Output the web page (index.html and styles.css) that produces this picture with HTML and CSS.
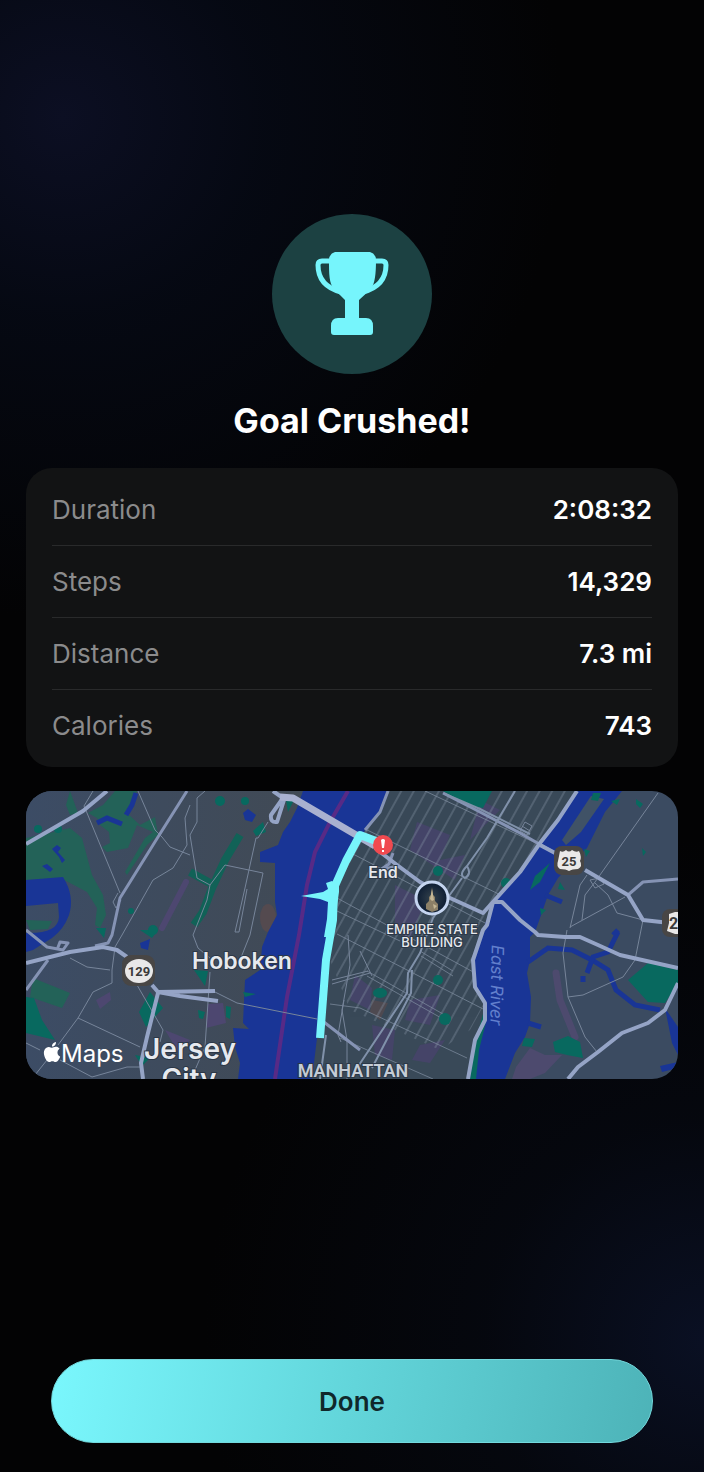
FILE: index.html
```html
<!DOCTYPE html>
<html lang="en">
<head>
    <meta charset="utf-8">
    <meta name="viewport" content="width=device-width, initial-scale=1">
    <title>Goal Crushed!</title>
    <link rel="stylesheet" href="styles.css">
</head>
<body>
    <main class="summary">
        <div class="badge">
            <svg class="trophy" viewBox="0 0 74 84" aria-hidden="true">
                <path class="handle" d="M17 9H7Q3 9 3 13C3 27 11 36 26 40M57 9H67Q71 9 71 13C71 27 63 36 48 40"/>
                <path d="M20 0H55Q61 2 61 8C61 22 60 31 56 37L44 48V66H51Q58 66 58 74V80Q58 83 55 83H19Q16 83 16 80V74Q16 66 23 66H30V48L19 37C14 31 14 22 14 8Q14 2 20 0Z"/>
            </svg>
        </div>
        <h1 class="title">Goal Crushed!</h1>

        <dl class="stats">
            <div class="stat"><dt>Duration</dt><dd>2:08:32</dd></div>
            <div class="stat"><dt>Steps</dt><dd>14,329</dd></div>
            <div class="stat"><dt>Distance</dt><dd>7.3 mi</dd></div>
            <div class="stat"><dt>Calories</dt><dd>743</dd></div>
        </dl>

        <div class="map">
            <svg viewBox="26 791 652 288" preserveAspectRatio="xMidYMid slice" role="img" aria-label="Map of the walked route">
                <defs>
                    <!-- Manhattan avenues -->
                    <pattern id="avenues" width="11" height="40" patternUnits="userSpaceOnUse" patternTransform="translate(400 880) rotate(29)">
                        <path class="street" d="M2 0V40"/>
                    </pattern>
                    <linearGradient id="jersey" x1="0" x2="1" y1="0" y2="0">
                        <stop offset="0" stop-color="#3c4c65"/>
                        <stop offset="0.5" stop-color="#3e4b5d"/>
                        <stop offset="1" stop-color="#414a55"/>
                    </linearGradient>
                    <radialGradient id="photo">
                        <stop offset="0" stop-color="#34424c"/>
                        <stop offset="1" stop-color="#0c1c33"/>
                    </radialGradient>
                </defs>
                <rect x="26" y="791" width="652" height="288" fill="#3b4b61"/>
                <rect x="26" y="791" width="274" height="288" fill="url(#jersey)"/>

                <!-- Parks -->
                <g class="park">
                    <path d="M26 838L50 833 70 828 82 838 92 875 103 895 106 915 100 928 95 925 97 908 87 892 70 883 60 878 26 880Z"/>
                    <path d="M70 791L78 813 70 815 66 805Z"/>
                    <path d="M88 813L103 805 115 791H137L127 813 140 825 155 817 158 835 147 845 127 875 125 872 145 838 153 832 137 825 128 848 107 852 102 847 110 843 109 832 100 825 97 818Z"/>
                    <path d="M26 920L52 921 48 929 30 930Z"/>
                    <path d="M33 978L70 993 62 1008 30 997Z"/>
                </g>
                <g class="park deep">
                    <path d="M26 997L34 998 42 1020 55 1040 26 1033ZM96 928H106L104 938ZM140 930H158L152 938ZM150 992L163 1008 146 1027 139 1012ZM135 1055L150 1058 142 1066Z"/>
                    <circle cx="220" cy="801" r="5"/><circle cx="245" cy="801" r="4"/>
                    <circle cx="131" cy="911" r="3"/><circle cx="153" cy="930" r="5"/>
                    <path d="M253 831L263 822 266 832 256 836ZM286 800L296 796 288 812Z"/>
                    <path class="strip" d="M240 835L225 860 212 888 203 912 194 925M190 872L210 883"/>
                    <path d="M194 970L208 971 205 986ZM198 1010L205 1012 203 1019 199 1018ZM226 1006L231 1007 230 1019 226 1017Z"/>
                    <circle cx="58" cy="829" r="4"/><circle cx="38" cy="829" r="4"/>
                </g>

                <!-- Districts -->
                <g class="district">
                    <path d="M186 882L162 928" stroke="#4d4770" stroke-width="6"/>
                    <path fill="#4d4770" d="M96 1000L110 992 111 1000 100 1009ZM208 1004L223 1003 226 1023 206 1028ZM165 1030L190 1040 180 1055Z"/>
                    <path d="M556 973L560 1000 575 1037" stroke="#4d4a6e" stroke-width="7"/>
                    <path fill="#4d4a6e" d="M516 1067L530 1048 545 1055 562 1055 545 1073 530 1079H512Z"/>
                    <ellipse cx="268" cy="918" rx="8" ry="14" fill="#544a4f"/>
                </g>

                <!-- Manhattan -->
                <path fill="#394958" d="M388 791H577L558 820 520 872 493 902 483 930 473 960 475 987 485 1003V1020L475 1040 468 1079H300L317 1038 330 900 365 830Z"/>
                <g class="district midtown">
                    <path d="M417 822L450 835 440 860 465 855 455 880 410 850ZM480 800L500 810 470 840ZM395 885L425 900 410 940 395 930ZM355 975L372 988 370 1010 350 1000ZM372 1025L395 1030 392 1060 375 1055ZM410 1000L440 995 430 1025 405 1020ZM420 1045L445 1040 430 1063 412 1060Z"/>
                    <path fill="#5e4a4c" d="M372 1000L388 1003 380 1020 370 1012Z"/>
                </g>
                <path fill="url(#avenues)" d="M388 791H577L558 820 520 872 493 902 483 930 473 960 475 987 485 1003 470 1030 440 1050 350 1010 330 960V900L365 830Z"/>
                <path class="street" d="M425 791L540 845M363 828L513 901M353 854L487 924M337 898L477 974M337 911L400 941M337 934L485 1010M367 971L443 1014M367 976L443 1019M420 951L453 971M421 956L453 976M330 1004L360 1008 467 1058M340 1038L433 1079"/>
                <g class="park deep">
                    <path d="M443 791H492L483 808 467 805Z"/>
                    <circle cx="438" cy="871" r="5"/><circle cx="506" cy="883" r="5"/>
                    <ellipse cx="380" cy="993" rx="7" ry="5"/><circle cx="445" cy="1019" r="6"/><circle cx="438" cy="980" r="5"/>
                </g>

                <!-- Water -->
                <g class="water">
                    <path d="M303 791L297 808 290 822 283 832 278 845 260 852V862L275 863V902L277 915 268 932 262 947 260 970 245 980 243 1023 249 1029 233 1028 235 1047 240 1063 238 1079H312L317 1038 330 900 365 830 380 812 388 791Z"/>
                    <path d="M577 791H622L605 812 587 848 558 878 548 895 540 918 535 932 530 937V960L527 973 531 997 530 1023 525 1037 515 1053 505 1079H468L475 1040 485 1020V1003L475 987 473 960 483 930 493 902 520 872 558 820Z"/>
                    <path d="M26 880L63 877Q75 896 69 915 64 929 52 938L33 950 26 952V933Q58 934 59 917L58 903 26 906Z"/>
                    <path d="M52 849L57 845 61 848 58 852 65 860 62 863 59 857ZM42 866L47 864 53 869 50 872ZM243 813L248 809 256 815 252 822 245 820ZM140 943L150 939 148 950 141 948Z"/>
                    <path d="M665 1008L678 1027V1055L672 1043ZM660 1066L678 1062V1068L662 1072Z"/>
                    <g class="creek">
                        <path d="M136 793L132 805 126 815M97 823L107 818 122 824"/>
                        <path d="M528 962L548 948 572 950 592 960 608 970 616 990 635 1005 660 1010"/>
                        <path d="M587 973L593 957 608 952 618 932M528 1023L541 1027M583 976V982M545 895L562 902M613 935L618 930"/>
                    </g>
                </g>
                <path fill="#405266" d="M591 796L604 799 581 832 566 845 562 840Z"/>
                <path class="park deep" d="M593 793L601 793 598 801 591 800ZM611 801L620 799 617 805ZM636 799L643 804 640 808 636 804ZM550 863L540 882 530 890 535 876ZM560 882L565 890 558 889ZM540 908L546 910 541 915ZM584 849L590 851 586 857ZM642 848L646 852 643 856ZM243 992L256 994 245 997ZM648 963L678 970V983L665 1003 648 1002 628 980ZM553 1042L568 1036 580 1042 583 1058 567 1055 555 1052ZM524 1038L535 1039 532 1047 522 1046ZM484 1010L486 1022 479 1050 476 1079H470L476 1040Z"/>

                <path class="ferry" d="M348 791L330 822 315 852 307 885 299 935 287 997 275 1079"/>

                <!-- Small roads -->
                <g class="road thin">
                    <path d="M93 791L84 806 87 813 120 893M138 791L155 830 162 837 170 847 190 855"/>
                    <path d="M190 805L185 818 187 845 173 868 153 880 122 935 115 947 112 970V983L93 992 78 1018 58 1045M205 791L197 798V822L190 835 197 878 210 885 207 900 193 935 198 948 210 958"/>
                    <path d="M268 822L258 838H256L245 888 235 932 239 932 247 889M210 885L225 865 263 873 250 935 240 960M210 972L205 1047 195 1070"/>
                    <path d="M78 1018L140 1047M70 958L87 967 110 970M137 985L163 1030 160 1042M26 1043L40 1050M60 1060L92 1077 127 1067H142M47 1060L35 1075M215 992L237 1003 317 1019"/>
                    <path d="M658 793L595 882 585 895 582 920M587 875L580 885 570 928M625 897L570 927M595 883L608 895 617 913 643 920 640 935 635 960 623 977 583 995 568 997"/>
                    <path d="M567 930L563 953 568 997 585 1037 597 1052M118 893L113 902 116 908 121 900"/>
                    <path d="M525 822L532 826 527 835 520 831ZM522 826L530 831M590 880L600 878 604 884 595 888Z"/>
                    <path d="M347 1079V1040L342 1010 350 965 348 935M332 984L370 973M332 980L368 971M360 951L372 976M344 1000L338 1035 341 1042"/>
                </g>

                <!-- Highways -->
                <g class="road">
                    <path d="M187 791L158 837 130 882 120 898 112 935 108 943 95 946M26 930L47 947 63 950 68 943 60 942 57 950M48 960L26 990"/>
                    <path d="M443 793L480 812 520 833 555 853M388 791L380 812 365 830"/>
                    <path d="M628 895L643 882 678 879M393 853L389 864 380 870 398 866M320 1019L360 1050"/>
                </g>
                <g class="road avenue">
                    <path d="M515 791L487 838 467 866Q458 875 465 878 472 874 467 866M462 878L433 918 420 953 408 973 407 993 357 1068M412 970L411 993 372 1068M445 794L480 809 530 834M326 1035L320 1079"/>
                </g>
                <g class="road wide">
                    <path d="M26 844L83 811 107 791M26 963L70 952 103 947 117 950 127 957M152 985L158 992 215 991M158 992L180 996 218 1001M158 993L147 1037 141 1063 143 1079"/>
                    <path d="M273 791L283 798 271 815Q270 823 277 822L284 800M493 902L502 902 520 920 535 932 538 935 565 937H580L598 945 620 955 678 968"/>
                    <path d="M577 791L558 820 540 843 520 872 493 902 487 925 483 930 473 960 475 987 485 1003V1020L475 1040 468 1079"/>
                    <path d="M585 870L628 895 643 920 670 923M555 853L540 845M678 983L665 1010 648 1023 622 1033 598 1052 578 1067 568 1079"/>
                    <path d="M375 848L397 865 420 882 450 898 483 913 493 902"/>
                </g>
                <path class="road bridge" d="M280 797L293 798 375 846"/>

                <!-- Walked route -->
                <path class="route" d="M384 844L360 835 346 861 334 888 333 920 326 960 320 1038"/>
                <path fill="#78f5fb" d="M301 896L323 892 328 889 326 883 332 881 339 886 339 892 335 920 330 937 324 937 327 919 328 902 320 899Z"/>

                <!-- Route shields -->
                <g class="shield">
                    <rect x="122" y="955" width="33" height="31" rx="9" fill="#484645"/>
                    <ellipse cx="139" cy="971" rx="14" ry="12" fill="#e9e8e8"/>
                    <text x="139" y="976">129</text>
                    <rect x="554" y="846" width="30" height="29" rx="8" fill="#484645"/>
                    <path fill="#e9e8e8" d="M560 851Q563 853 566 850 569 853 572 850 576 853 579 851 582 857 580 861 583 866 578 869 572 869 569 871 566 869 560 869 556 866 558 861 557 856Z"/>
                    <text x="569" y="866">25</text>
                    <rect x="662" y="909" width="30" height="28" rx="8" fill="#484645"/>
                    <path fill="#e9e8e8" d="M669 914L675 912H690V934H675L667 931 669 923Z"/>
                    <text class="shield-cut" x="669" y="929">2</text>
                </g>

                <!-- Pins -->
                <circle cx="383" cy="845" r="10" fill="#f04a50"/>
                <path fill="#fff" d="M381 840Q383 838 385 840L384 848H382ZM382 850H384V852H382Z"/>
                <circle cx="432" cy="898" r="16" fill="url(#photo)" stroke="#c5d5f0" stroke-width="3"/>
                <path fill="#8c8067" d="M432 887L433 895 435 897 435 901 438 904V910L432 912 426 909V904L429 901V897L431 895Z"/>
                <path fill="#c5b795" d="M432 889L434 900 432 901 430 899ZM433 904L437 906 434 909Z"/>

                <!-- Labels -->
                <g class="label">
                    <text class="label-end" x="383" y="878">End</text>
                    <text class="label-poi" x="432" y="934">EMPIRE STATE</text>
                    <text class="label-poi" x="432" y="947">BUILDING</text>
                    <text class="label-town" x="242" y="969">Hoboken</text>
                    <text class="label-city" x="190" y="1059">Jersey</text>
                    <text class="label-city" x="189" y="1089">City</text>
                    <text class="label-borough" x="353" y="1077">MANHATTAN</text>
                </g>
                <text class="label-river" transform="translate(491 985) rotate(91)">East River</text>

                <svg x="43" y="1042" width="18" height="20" viewBox="2 0 20 24">
                    <path fill="#fff" d="M12.152 6.896c-.948 0-2.415-1.078-3.96-1.04-2.04.027-3.91 1.183-4.961 3.014-2.117 3.675-.546 9.103 1.519 12.09 1.013 1.454 2.208 3.09 3.792 3.039 1.52-.065 2.09-.987 3.935-.987 1.831 0 2.35.987 3.96.948 1.637-.026 2.676-1.48 3.676-2.948 1.156-1.688 1.636-3.325 1.662-3.415-.039-.013-3.182-1.221-3.22-4.857-.026-3.04 2.48-4.494 2.597-4.559-1.429-2.09-3.623-2.324-4.39-2.376-2-.156-3.675 1.09-4.61 1.09zM15.53 3.83c.843-1.012 1.4-2.427 1.245-3.83-1.207.052-2.662.805-3.532 1.818-.78.896-1.454 2.338-1.273 3.714 1.338.104 2.715-.688 3.559-1.701"/>
                </svg>
                <text class="brand" x="61" y="1062">Maps</text>
            </svg>
        </div>
    </main>

    <footer class="actions">
        <button type="button" class="done">Done</button>
    </footer>
</body>
</html>
```

FILE: styles.css
```css
* {
    box-sizing: border-box;
}

body {
    display: flex;
    flex-direction: column;
    min-height: 100vh;
    margin: 0;
    background:
        radial-gradient(circle at 9% 8%, #0c0f23 0, rgba(6, 10, 22, 0.8) 200px, transparent 500px),
        radial-gradient(circle at 100% 91%, #0a1023 0, rgba(6, 9, 18, 0.7) 220px, transparent 500px),
        #030304;
    color: #fff;
    font-family: Inter, "Liberation Sans", sans-serif;
}

.summary {
    flex: 1;
    display: flex;
    flex-direction: column;
    align-items: center;
    justify-content: center;
    padding: 0 26px;
}

.badge {
    display: flex;
    align-items: center;
    justify-content: center;
    width: 160px;
    height: 160px;
    border-radius: 50%;
    background: #1c4142;
}

.trophy {
    width: 74px;
    height: 84px;
    fill: #76f5fc;
}

.handle {
    fill: none;
    stroke: #76f5fc;
    stroke-width: 5;
}

.title {
    margin: 26px 0;
    font-size: 34px;
    line-height: 42px;
    font-weight: 700;
}

/* Stats card */
.stats {
    width: 100%;
    margin: 0 0 24px;
    padding: 6px 26px;
    border-radius: 26px;
    background: #121314;
    font-size: 26px;
    line-height: 31px;
}

.stat {
    display: flex;
    justify-content: space-between;
    padding: 20px 0;
}

.stat + .stat {
    border-top: 1px solid #292a2b;
}

.stat dt {
    color: #8b8b8c;
}

.stat dd {
    margin: 0;
    font-weight: 600;
}

/* Map */
.map {
    width: 100%;
    border-radius: 26px;
    overflow: hidden;
}

.map svg {
    display: block;
}

.map > svg {
    width: 100%;
}

.park {
    fill: #236258;
}

.deep {
    fill: #08695f;
}

.strip {
    fill: none;
    stroke: #116257;
    stroke-width: 8;
}

.district {
    stroke-linecap: round;
}

.district path[stroke] {
    fill: none;
}

.midtown {
    fill: #4d4173;
    opacity: 0.6;
}

.water {
    fill: #193596;
}

.creek {
    fill: none;
    stroke: #193596;
    stroke-width: 5;
}

.street {
    fill: none;
    stroke: #8290a3;
    stroke-width: 1;
    opacity: 0.7;
}

.ferry {
    fill: none;
    stroke: #572a86;
    stroke-width: 4;
}

.road {
    fill: none;
    stroke: #8593b4;
    stroke-width: 3;
    stroke-linejoin: round;
}

.thin {
    stroke: #77859a;
    stroke-width: 1;
}

.avenue {
    stroke: #8091aa;
    stroke-width: 2;
}

.wide {
    stroke: #95a4c6;
    stroke-width: 4;
}

.bridge {
    stroke: #a9b1d0;
    stroke-width: 7;
}

.route {
    fill: none;
    stroke: #78f5fb;
    stroke-width: 8;
    stroke-linejoin: round;
}

.shield {
    fill: #3b3a3a;
    font: 700 13px Roboto, "Liberation Sans", sans-serif;
    text-anchor: middle;
}

.shield .shield-cut {
    font-size: 16px;
    text-anchor: start;
}

.label {
    fill: #e6e9ee;
    stroke: #2b3747;
    stroke-width: 2;
    paint-order: stroke;
    font-weight: 600;
    text-anchor: middle;
}

.label-end {
    font-size: 16px;
}

.label-poi {
    font-size: 13px;
    font-weight: 500;
}

.label-town {
    font-size: 23px;
}

.label-city {
    font-size: 28px;
}

.label-borough {
    fill: #c5ccd6;
    font-family: Roboto, "Liberation Sans", sans-serif;
    font-size: 18px;
}

.label-river {
    fill: #6380cd;
    font-size: 17px;
    font-style: italic;
    text-anchor: middle;
}

.brand {
    fill: #fff;
    font-size: 24px;
}

/* Bottom button */
.actions {
    padding: 66px 51px 29px;
}

.done {
    display: block;
    width: 100%;
    height: 84px;
    border: 1px solid #73d9dd;
    border-radius: 42px;
    background: linear-gradient(100deg, #7af7fd, #62d5da 50%, #4db3b8);
    color: #10282b;
    font: 600 26px/31px Inter, "Liberation Sans", sans-serif;
}
```
